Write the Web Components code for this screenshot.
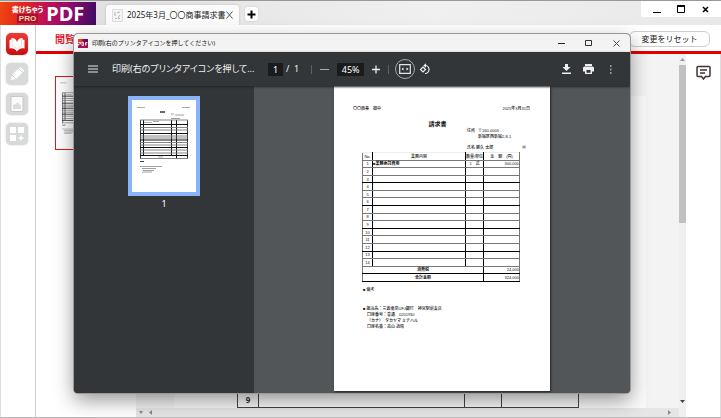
<!DOCTYPE html>
<html lang="ja">
<head>
<meta charset="utf-8">
<title>書けちゃうPRO PDF</title>
<style>
html, body { height: 100%; margin: 0; }
body { font-family: "Noto Sans", "Noto Sans CJK JP", sans-serif; overflow: hidden; color: #222; }
</style>
</head>
<body>
<app-window></app-window>
<script>
const BASE = `<style>
*, ::before, ::after { box-sizing: border-box; }
button { font: inherit; color: inherit; background: none; border: 0; padding: 0; margin: 0; display: grid; place-items: center; }
svg { display: block; }
</style>`;
function define(name, html) {
  const template = document.createElement('template');
  template.innerHTML = BASE + html;
  customElements.define(name, class extends HTMLElement {
    constructor() {
      super();
      this.attachShadow({ mode: 'open' }).append(template.content.cloneNode(true));
    }
  });
}

define('brand-logo', `<style>
:host { display: flex; align-items: center; justify-content: center; gap: 3px; width: 96px; height: 23px; color: #fff;
  background: linear-gradient(100deg, #ee4a10 0%, #e5261c 22%, #c01055 48%, #8b0b6c 72%, #3c0b62 100%); }
.small { display: flex; flex-direction: column; align-items: center; font-weight: 900; font-size: 7px; line-height: 10px; font-family: "Noto Sans CJK JP", sans-serif; white-space: nowrap; font-feature-settings: "palt"; }
.pro { font: 700 8px/9px "Liberation Sans", sans-serif; color: #ffd9a0; background: #a51238; padding: 0 2px; }
.pdf { font: 700 20px/22px "Noto Sans", sans-serif; }
</style><div class="small"><span>書けちゃう</span><span class="pro">PRO</span></div><span class="pdf">PDF</span>`);

define('tab-bar', `<style>
:host { display: flex; height: 25px; padding-top: 1px; border-top: 1px solid #999; background: linear-gradient(90deg, #ddd, #f0f0f0 60%, #e8e8e8); }
.tab { display: flex; align-items: center; width: 133px; margin: 3px 0 0 10px; padding: 0 6px; background: #fbfbfb; border-radius: 3px 3px 0 0; box-shadow: 0 0 3px #bbb; }
.name { margin: 0 auto 0 4px; white-space: nowrap; font-size: 8px; line-height: 12px; color: #222; }
.add { width: 13px; height: 14px; margin: 5px 0 0 6px; border-radius: 3px; background: #fff; box-shadow: 0 0 2px #bbb; }
.win { display: flex; margin: -1px 0 0 auto; width: 80px; height: 16px; background: #fff; border-radius: 0 0 0 2px; padding: 0 4px; justify-content: space-around; }
</style>
<brand-logo></brand-logo>
<div class="tab">
<svg width="11" height="13" viewBox="0 0 11 13"><path d="M.5.5h10v12H.5z" fill="#f5f5f5" stroke="#ddd"/><path d="M3 3v4M3 9.500h2M5 4l3-1M8 6l-2 3M6 9.500h2" stroke="#b5b5b5" fill="none"/></svg>
<span class="name">2025年3月_〇〇商事請求書</span>
<button aria-label="タブを閉じる"><svg width="7" height="8" viewBox="0 0 7 8"><path d="M.5.5l6 7M6.500.500l-6 7" stroke="#555"/></svg></button>
</div>
<button class="add" aria-label="追加"><svg width="9" height="9" viewBox="0 0 9 9"><path d="M4.500.500v8M.5 4.500h8" stroke="#000" stroke-width="2"/></svg></button>
<div class="win">
<button aria-label="最小化"><svg width="8" height="8"><path d="M0 7.500h8" stroke="#000"/></svg></button>
<button aria-label="最大化"><svg width="8" height="8"><path d="M.5 1v6.500h7V1" fill="none" stroke="#000"/><path d="M0 1h8" stroke="#000" stroke-width="2"/></svg></button>
<button aria-label="閉じる"><svg width="7" height="7"><path d="M1 1l5 5M6 1L1 6" stroke="#000" stroke-width="1.600"/></svg></button>
</div>`);

define('tool-rail', `<style>
:host { display: flex; flex-direction: column; align-items: center; gap: 8px; width: 36px; padding: 8px 3px 0 0; background: #fff; border-left: 1px solid #ddd; border-right: 1px solid #ccc; }
button { width: 22px; height: 22px; border-radius: 5px; background: #d8dad9; box-shadow: 0 0 2px #ccc; }
.on { background: linear-gradient(#f03a32, #c90d13); }
</style>
<button class="on" aria-label="閲覧"><svg width="18" height="18" viewBox="0 0 18 18"><path d="M1.500 5l2-.5V3c3 0 4.700 1.500 5.500 4 .8-2.500 2.500-4 5.500-4v1.500l2 .5v8.500c-3-.8-5.500.3-7.500 3-2-2.700-4.500-3.800-7.500-3z" fill="#fff"/><path d="M4.500 4.500v7c2 0 3.500 1 4.500 3 1-2 2.500-3 4.500-3v-7" fill="none" stroke="#f3c6c0" stroke-width=".6"/></svg></button>
<button aria-label="編集"><svg width="18" height="18" viewBox="0 0 18 18"><path d="M3 15l1-5 7-7c1-1 2-1 3 0l1 1c1 1 1 2 0 3l-7 7z" fill="#fff"/><path d="M4 10l4 4M10.500 3.500l4 4" stroke="#d0d0d0"/></svg></button>
<button aria-label="画像"><svg width="14" height="16" viewBox="0 0 14 16"><path d="M1 .5h12v15H1z" fill="#fbfbfb" stroke="#c8c8c8"/><path d="M3 13V9.500l1.500-1.500 1 .5 2-2.500 3.500 4v3z" fill="#dcdcdc"/></svg></button>
<button aria-label="ツール"><svg width="14" height="14" viewBox="0 0 14 14"><path d="M0 0h6v6H0zM8 0h6v6H8zM0 8h6v6H0z" fill="#fff"/><path d="M11 8.500v5M8.500 11h5" stroke="#fff" stroke-width="1.500"/></svg></button>`);

define('mode-header', `<style>
:host { display: flex; align-items: center; justify-content: space-between; height: 29px; padding: 1px 11px 0 19px; border-bottom: 3px solid #e10000; background: #fff; }
h1 { margin: 0; color: #e00012; font-size: 10px; line-height: 14px; font-weight: 500; font-family: "Noto Sans CJK JP", sans-serif; }
button { width: 81px; height: 16px; border: 1px solid #ccc; border-radius: 6px; font-size: 8px; line-height: 12px; background: #fff; }
</style><h1>閲覧</h1><button>変更をリセット</button>`);

/* Miniature of the invoice: text is shown as small grey strokes */
define('mini-page', `<style>:host { display: block; background: #fff; } svg { width: 100%; height: 100%; }</style>
<svg viewBox="0 0 64 92" preserveAspectRatio="none">
<path d="M5 7.500h8M50 7.500h8" stroke="#ababab"/><path d="M28 12h5" stroke="#333" stroke-width="1.500"/>
<path d="M39 14h3M43 15h9M39 18.500h9" stroke="#888" stroke-width=".8"/>
<path d="M8.500 20v39M55.500 20v39" stroke="#333"/><path d="M11.500 20v35M44.500 20v39M39.500 20v35" stroke="#111"/>
<path d="M8 20h48M8 27.500h48M8 30h48M8 36h48M8 38h48M8 42.500h48M8 45h48M8 50h48M8 53h48M8 58.500h48" stroke="#777" stroke-width=".9"/>
<path d="M8 24.500h48M8 33.500h48M8 40h48M8 47.500h48M8 55.500h48" stroke="#111"/>
<path d="M12 22.500h8M21 21.500h6M26 57h5" stroke="#888" stroke-width=".7"/>
<path d="M8 61.500h4" stroke="#444"/><path d="M8 66.500h22M10 68.500h14M11 70.500h11M10 72h10" stroke="#8a8a8a" stroke-width=".8"/></svg>`);

define('thumb-panel', `<style>
:host { display: block; width: 100px; padding: 22px 0 0 19px; background: #fff; }
.page { display: block; width: 52px; height: 74px; border: 1px solid #e10000; opacity: .9; }
</style><mini-page class="page"></mini-page>`);

define('doc-canvas', `<style>
:host { display: flex; flex-direction: column; flex: 1; background: #f3f3f3; min-width: 0; }
.sheet { flex: 1; display: flex; align-items: flex-end; margin: 42px 33px 0 38px; background: #fafafa; padding: 0 67px 0 63px; }
table { width: 100%; border-collapse: collapse; table-layout: fixed; }
td { height: 16px; padding: 0; border: 1px solid #444; text-align: center; font: 700 8px/10px "Noto Sans", sans-serif; color: #333; }
td:first-child { width: 21px; } td:nth-child(3) { width: 37px; } td:nth-child(4) { width: 77px; }
.bar { display: flex; justify-content: space-between; height: 9px; padding: 2px 7px 2px 3px; background: #e6e6e6; }
.left { display: flex; gap: 5px; }
</style>
<div class="sheet"><table><tr><td>9</td><td></td><td></td><td></td></tr></table></div>
<div class="bar"><div class="left"><svg width="4" height="5"><path d="M0 1h4L2 4z" fill="#888"/></svg><svg width="4" height="5"><path d="M4 0v5L1 2.500z" fill="#888"/></svg></div><svg width="4" height="5"><path d="M0 0v5l3-2.500z" fill="#888"/></svg></div>`);

define('scroll-track', `<style>
:host { display: flex; flex-direction: column; align-items: center; width: 7px; padding: 4px 0 14px; background: #f0f0f0; }
.thumb { width: 100%; height: 158px; margin: 3px 0 auto; background: #c1c1c1; }
</style><svg width="5" height="4"><path d="M0 3h5L2.500 0z" fill="#999"/></svg><div class="thumb"></div><svg width="5" height="3"><path d="M0 0h5L2.500 3z" fill="#444"/></svg>`);

define('comment-rail', `<style>
:host { display: flex; justify-content: center; align-items: flex-start; width: 35px; padding-top: 11px; background: #fff; border-right: 1px solid #ddd; }
</style><button aria-label="コメント"><svg width="15" height="16" viewBox="0 0 15 16"><path d="M2 1.500h11q1 0 1 1v8q0 1-1 1H9.500l-2 2.500-2-2.500H2q-1 0-1-1v-8q0-1 1-1z" fill="none" stroke="#433" stroke-width="1.500"/><path d="M4 5h7M4 8h5" stroke="#433" stroke-width="1.300"/></svg></button>`);

define('dialog-title', `<style>
:host { display: flex; align-items: center; height: 18px; gap: 4px; padding: 0 10px 0 4px; background: #f3f3f3; }
.title { flex: 1; font-size: 6px; line-height: 12px; color: #111; white-space: nowrap; }
.win { display: flex; gap: 20px; }
</style>
<svg width="10" height="9" viewBox="0 0 10 9"><path d="M0 0h10v9H0z" fill="#a3124f"/><path d="M0 0h4v4H0z" fill="#e4402c"/><path d="M6 0h4v4H6z" fill="#58105f"/><path d="M.5 3.500h2v1.500h-2v1.500M4 3v3.500h1.500v-3zM7.500 6.500v-3h2M7.500 5h1.500" fill="none" stroke="#fff" stroke-width=".8"/></svg>
<span class="title">印刷(右のプリンタアイコンを押してください)</span>
<div class="win">
<button aria-label="最小化"><svg width="7" height="8"><path d="M0 4.500h7" stroke="#222"/></svg></button>
<button aria-label="最大化"><svg width="8" height="8"><path d="M.5 1.500h6v5h-6z" fill="none" stroke="#333"/></svg></button>
<button aria-label="閉じる"><svg width="7" height="7"><path d="M.5.5l6 6M6.500.500l-6 6" stroke="#444"/></svg></button>
</div>`);

define('pdf-toolbar', `<style>
:host { display: flex; align-items: center; height: 34px; padding: 0 14px; background: #323639; color: #f1f1f1; box-shadow: 0 1px 2px #222; position: relative; font-size: 9px; line-height: 12px; white-space: nowrap; }
.title { width: 145px; margin: 0 11px 0 14px; font-feature-settings: "palt"; }
input { width: 15px; height: 13px; padding: 0; border: 0; background: #191b1c; color: #fff; font: 9px/13px "Noto Sans", sans-serif; text-align: center; }
.zoom { width: 27px; }
.total { margin: 0 12px 0 3px; }
.sep { width: 1px; height: 9px; background: #5c6063; }
.zo, .zi { margin: 0 8px; }
.fit { width: 20px; height: 20px; border: 1px solid #a5a8aa; border-radius: 50%; margin: 0 4px 0 6px; }
.end { display: flex; align-items: center; margin-left: auto; gap: 12px; }
</style>
<button aria-label="メニュー"><svg width="10" height="8"><path d="M0 1h10M0 4h10M0 7h10" stroke="#aaadaf" stroke-width="1.500"/></svg></button>
<span class="title">印刷(右のプリンタアイコンを押して...</span>
<input aria-label="ページ" value="1"><span class="total">/ &nbsp;1</span><i class="sep"></i>
<button class="zo" aria-label="縮小"><svg width="9" height="9"><path d="M0 4.500h9" stroke="#aaa"/></svg></button>
<input class="zoom" aria-label="倍率" value="45%">
<button class="zi" aria-label="拡大"><svg width="8" height="9"><path d="M0 4.500h8M4 .5v8" stroke="#eee" stroke-width="1.300"/></svg></button><i class="sep"></i>
<button class="fit" aria-label="幅に合わせる"><svg width="12" height="10" viewBox="0 0 12 10"><path d="M.7.700h10.600v8.600H.7z" fill="none" stroke="#e5e5e5" stroke-width="1.200"/><path d="M4.500 3.500v3L2.500 5zM7.500 3.500v3l2-1.500z" fill="#fff"/></svg></button>
<button aria-label="回転"><svg width="12" height="12" viewBox="0 0 12 12"><path d="M4 4l2.500 2.500L4 9 1.500 6.500zM6 2.500a4 4 0 1 1 0 8" fill="none" stroke="#eee" stroke-width="1.200"/><path d="M7 .2v4.600L4.300 2.500z" fill="#eee"/></svg></button>
<div class="end">
<button aria-label="ダウンロード"><svg width="9" height="10"><path d="M3 0h3v3h2.500l-4 4-4-4H3zM0 8.500h9V10H0z" fill="#eee"/></svg></button>
<button aria-label="印刷"><svg width="11" height="10"><path d="M2 0h7v2H2zM1.500 2.500h8Q11 2.500 11 4v3.500H9V10H2V7.500H0V4q0-1.500 1.500-1.500z" fill="#eee"/><path d="M3.500 6h4v2.800h-4z" fill="#323639"/></svg></button>
<button aria-label="その他"><svg width="10" height="9"><path d="M4 0h1.500v2H4zM4 3.500h1.500v2H4zM4 7h1.500v2H4z" fill="#999ca0"/></svg></button>
</div>`);

const rows = Array.from({ length: 14 }, (_, i) => i
  ? `<tr><td>${i + 1}</td><td></td><td></td><td></td></tr>`
  : `<tr><td>1</td><td class="l b">■業務委託費用</td><td>1　式</td><td class="r">300,000</td></tr>`).join('');
define('invoice-page', `<style>
:host { display: block; width: 216px; background: #fff; color: #111; padding: 19px 20px 0 19px; font: 500 4px/6px "Liberation Sans", "Noto Sans CJK JP", sans-serif; white-space: nowrap; }
.row { display: flex; justify-content: space-between; line-height: 8px; }
h2 { margin: 7px 0 0 10px; padding-right: 18px; text-align: center; font: 700 6px/8px "Noto Sans CJK JP", sans-serif; }
.addr { margin-left: 114px; display: grid; grid-template-columns: 11px auto; line-height: 6px; }
.who { display: flex; justify-content: space-between; margin: 5px 4px 1px 114px; }
table { width: 158px; height: 130px; margin-left: 9px; border-collapse: collapse; table-layout: fixed; }
th, td { padding: 0; border: 1px solid #777; border-left-color: #000; border-right-color: #000; text-align: center; font-weight: 500; font-size: 4px; line-height: 5px; }
tr:nth-child(3n+1) td { border-bottom-color: #000; }
tr:last-child td { border-bottom-color: #000; }
th { border-top-color: #eee; }
td:first-child, th:first-child { border-left-color: #777; }
td:last-child, th:last-child { border-right-color: #777; }
.l { text-align: left; } .r { text-align: right; } .b { font-weight: 700; }
.memo { margin: 5px 0 13px 10px; }
.bank { margin: 0 0 0 10px; } .bank div { padding-left: 4px; }
</style>
<div class="row"><span>〇〇商事　御中</span><span>2025年3月31日</span></div>
<h2>請求書</h2>
<div class="addr"><span>住所</span><span>〒160-0000</span><span></span><span>新宿区西新宿2-8-1</span></div>
<div class="who"><span>氏名 勝久 太郎</span><span>㊞</span></div>
<table><colgroup><col style="width:10px"><col><col style="width:18px"><col style="width:36px"></colgroup>
<tr><th>No.</th><th>業務内容</th><th>数量/単位</th><th>金　額　(円)</th></tr>${rows}
<tr><td colspan="3" class="b">消費税</td><td class="r">24,000</td></tr>
<tr><td colspan="3" class="b">合計金額</td><td class="r">324,000</td></tr></table>
<div class="memo">■ 備考</div>
<div class="bank">■ 振込先：三菱東京UFJ銀行　神宮駅前支店<div>口座番号：普通　0201930</div><div>（カナ）　タカヤマ ミチハル</div><div>口座名義：高山 道晴</div></div>`);

define('print-dialog', `<style>
:host { display: flex; flex-direction: column; border-radius: 4px; overflow: hidden; background: #323639; box-shadow: 0 0 0 1px #999, 0 7px 20px rgba(0,0,0,.42); }
.view { flex: 1; display: flex; min-height: 0; }
aside { width: 180px; background: #323639; display: flex; flex-direction: column; align-items: center; padding: 10px 0 0; color: #fff; font-size: 9px; line-height: 16px; }
mini-page { width: 72px; height: 100px; border: 4px solid #8ab4f8; }
main { flex: 1; display: flex; justify-content: center; padding-bottom: 2px; background: #525659; }
invoice-page { box-shadow: 1px 1px 2px #222; }
</style>
<dialog-title></dialog-title><pdf-toolbar></pdf-toolbar>
<div class="view"><aside><mini-page></mini-page><span>1</span></aside><main><invoice-page></invoice-page></main></div>`);

define('app-window', `<style>
:host { display: flex; flex-direction: column; height: 100%; position: relative; overflow: hidden; border-bottom: 1px solid #bbb; background: #fff; }
.body, .work { flex: 1; display: flex; min-height: 0; }
.col { flex: 1; display: flex; flex-direction: column; min-width: 0; }
print-dialog { position: absolute; inset: 34px 91px 24px 74px; }
:host { box-sizing: border-box; }
</style>
<tab-bar></tab-bar>
<div class="body"><tool-rail></tool-rail><div class="col"><mode-header></mode-header>
<div class="work"><thumb-panel></thumb-panel><doc-canvas></doc-canvas><scroll-track></scroll-track><comment-rail></comment-rail></div></div></div>
<print-dialog></print-dialog>`);
</script>
</body>
</html>
